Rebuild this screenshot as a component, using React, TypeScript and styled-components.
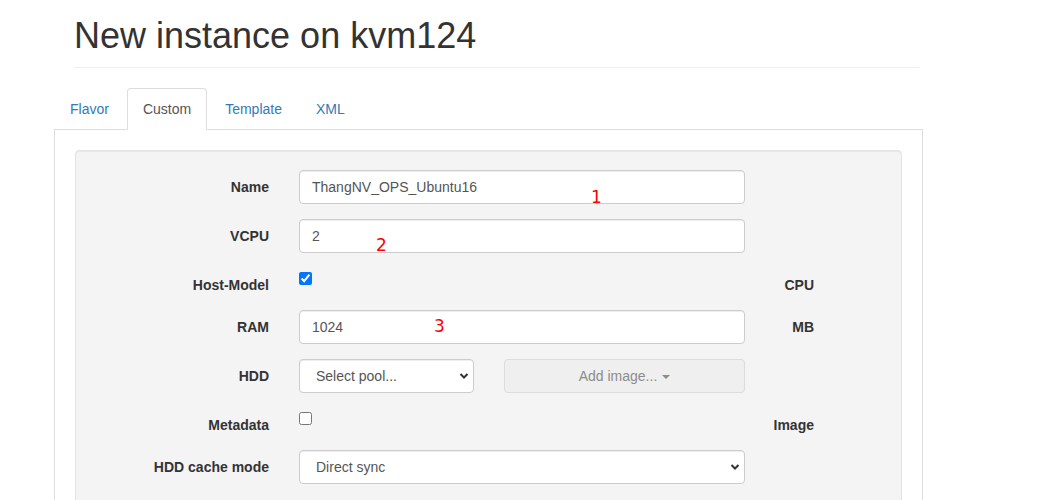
import React from "react";
import styled, { createGlobalStyle } from "styled-components";

const GlobalStyle = createGlobalStyle`
  html, body {
    margin: 0;
    padding: 0;
    background: #fff;
  }
  body {
    font-family: "Liberation Sans", Arial, sans-serif;
    font-size: 14px;
    line-height: 20px;
    color: #333;
  }
  * {
    box-sizing: border-box;
  }
`;

const Page = styled.div`
  width: 869px;
  margin-left: 54px;
`;

const Header = styled.div`
  margin: 0 4px 20px 20px;
  padding-bottom: 11px;
  border-bottom: 1px solid #eee;
`;

const Title = styled.h1`
  margin: 16px 0 0;
  font-size: 36px;
  line-height: 40px;
  font-weight: 400;
  color: #333;
`;

const Tabs = styled.ul`
  display: flex;
  margin: 0;
  padding: 0;
  list-style: none;
  border-bottom: 1px solid #ddd;
`;

const Tab = styled.li<{ $active?: boolean }>`
  margin: 0 2px -1px 0;
  padding: 10px 15px;
  line-height: 20px;
  border: 1px solid ${(p) => (p.$active ? "#ddd" : "transparent")};
  border-bottom-color: transparent;
  border-radius: 4px 4px 0 0;
  background: ${(p) => (p.$active ? "#fff" : "transparent")};
  color: ${(p) => (p.$active ? "#555" : "#337ab7")};
  cursor: pointer;
`;

const TabPanel = styled.div`
  border: 1px solid #ddd;
  border-top: none;
  padding: 20px 20px 40px;
`;

const Well = styled.div`
  background: #f4f4f4;
  border: 1px solid #e3e3e3;
  border-radius: 4px;
  box-shadow: inset 0 1px 1px rgba(0, 0, 0, 0.05);
  padding: 19px;
`;

const Form = styled.form`
  display: grid;
  grid-template-columns: 204px 446px 69px;
  row-gap: 15px;
`;

const Label = styled.label`
  padding: 7px 30px 0 0;
  font-weight: 700;
  line-height: 20px;
  text-align: right;
  white-space: nowrap;
`;

const Unit = styled(Label)`
  padding-right: 0;
`;

const Field = styled.div`
  position: relative;
`;

const CheckField = styled(Field)`
  height: 27px;
`;

const Input = styled.input`
  display: block;
  width: 100%;
  height: 34px;
  padding: 6px 12px;
  font: inherit;
  color: #555;
  background: #fff;
  border: 1px solid #ccc;
  border-radius: 4px;
  box-shadow: inset 0 1px 1px rgba(0, 0, 0, 0.075);
  outline: none;
`;

const SelectWrap = styled.div<{ $width?: number }>`
  position: relative;
  width: ${(p) => (p.$width ? `${p.$width}px` : "100%")};
  flex: none;
`;

const Select = styled.select`
  display: block;
  width: 100%;
  height: 34px;
  padding: 6px 24px 6px 16px;
  font: inherit;
  color: #555;
  background: #fff;
  border: 1px solid #ccc;
  border-radius: 4px;
  box-shadow: inset 0 1px 1px rgba(0, 0, 0, 0.075);
  appearance: none;
  -webkit-appearance: none;
  outline: none;
`;

const Chevron = styled.svg`
  position: absolute;
  right: 5px;
  top: 13px;
  pointer-events: none;
`;

const Checkbox = styled.input`
  display: block;
  width: 13px;
  height: 13px;
  margin: 4px 0 0;
`;

const InlineRow = styled.div`
  display: flex;
  gap: 30px;
`;

const AddButton = styled.button`
  flex: 1;
  height: 34px;
  display: flex;
  align-items: center;
  justify-content: center;
  gap: 5px;
  font: inherit;
  color: #8c8c8c;
  background: #efefef;
  border: 1px solid #dcdcdc;
  border-radius: 4px;
  cursor: not-allowed;
`;

const Caret = styled.span`
  width: 0;
  height: 0;
  margin-top: 1px;
  border-left: 4px solid transparent;
  border-right: 4px solid transparent;
  border-top: 4px solid #8c8c8c;
`;

const Note = styled.span<{ $x: number; $y: number }>`
  position: absolute;
  left: ${(p) => p.$x}px;
  top: ${(p) => p.$y}px;
  font-family: "DejaVu Sans", sans-serif;
  font-size: 17px;
  line-height: 18px;
  color: #ff0000;
  pointer-events: none;
`;

function SelectBox({ value, width }: { value: string; width?: number }) {
  return (
    <SelectWrap $width={width}>
      <Select defaultValue={value}>
        <option>{value}</option>
      </Select>
      <Chevron width="10" height="8" viewBox="0 0 10 8">
        <path d="M1.5 2 L5 5.5 L8.5 2" fill="none" stroke="#333" strokeWidth="2" />
      </Chevron>
    </SelectWrap>
  );
}

export default function App() {
  return (
    <Page>
      <GlobalStyle />
      <Header>
        <Title>New instance on kvm124</Title>
      </Header>
      <Tabs>
        <Tab>Flavor</Tab>
        <Tab $active>Custom</Tab>
        <Tab>Template</Tab>
        <Tab>XML</Tab>
      </Tabs>
      <TabPanel>
        <Well>
          <Form onSubmit={(e) => e.preventDefault()}>
            <Label>Name</Label>
            <Field>
              <Input defaultValue="ThangNV_OPS_Ubuntu16" />
              <Note $x={292} $y={18}>1</Note>
            </Field>
            <Unit />

            <Label>VCPU</Label>
            <Field>
              <Input defaultValue="2" />
              <Note $x={77} $y={17}>2</Note>
            </Field>
            <Unit />

            <Label>Host-Model</Label>
            <CheckField>
              <Checkbox type="checkbox" defaultChecked />
            </CheckField>
            <Unit>CPU</Unit>

            <Label>RAM</Label>
            <Field>
              <Input defaultValue="1024" />
              <Note $x={135} $y={7}>3</Note>
            </Field>
            <Unit>MB</Unit>

            <Label>HDD</Label>
            <InlineRow>
              <SelectBox value="Select pool..." width={175} />
              <AddButton type="button">
                Add image...
                <Caret />
              </AddButton>
            </InlineRow>
            <Unit />

            <Label>Metadata</Label>
            <CheckField>
              <Checkbox type="checkbox" />
            </CheckField>
            <Unit>Image</Unit>

            <Label>HDD cache mode</Label>
            <SelectBox value="Direct sync" />
            <Unit />
          </Form>
        </Well>
      </TabPanel>
    </Page>
  );
}
